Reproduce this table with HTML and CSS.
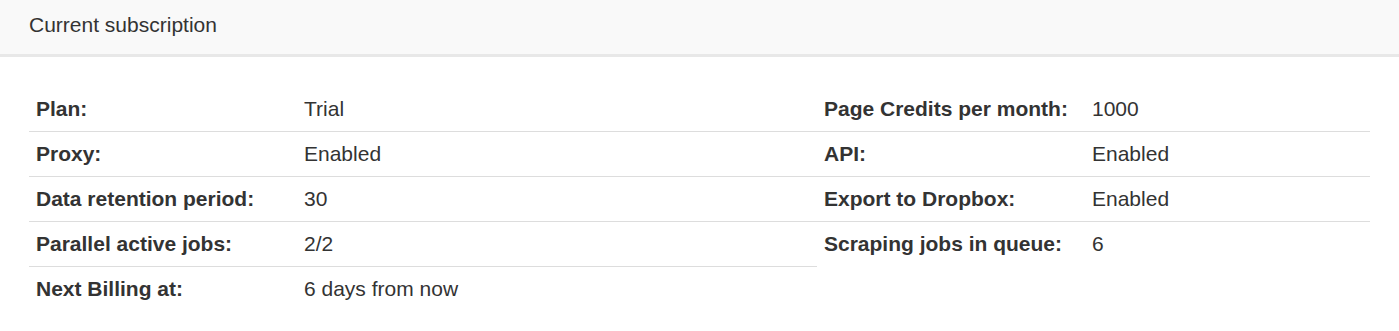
FILE: index.html
```html
<!DOCTYPE html>
<html lang="en">
<head>
    <meta charset="UTF-8">
    <meta name="viewport" content="width=device-width, initial-scale=1.0">
    <title>Current subscription</title>
    <link rel="stylesheet" href="styles.css">
</head>
<body>

    <div class="panel">
        <div class="panel-heading">Current subscription</div>

        <div class="panel-body">
            <table class="details">
                <tr><th>Plan:</th><td>Trial</td></tr>
                <tr><th>Proxy:</th><td>Enabled</td></tr>
                <tr><th>Data retention period:</th><td>30</td></tr>
                <tr><th>Parallel active jobs:</th><td>2/2</td></tr>
                <tr><th>Next Billing at:</th><td>6 days from now</td></tr>
            </table>

            <table class="details">
                <tr><th>Page Credits per month:</th><td>1000</td></tr>
                <tr><th>API:</th><td>Enabled</td></tr>
                <tr><th>Export to Dropbox:</th><td>Enabled</td></tr>
                <tr><th>Scraping jobs in queue:</th><td>6</td></tr>
            </table>
        </div>
    </div>

</body>
</html>
```

FILE: styles.css
```css
body {
    margin: 0;
    font-family: 'Liberation Sans', Arial, sans-serif;
    font-size: 21px;
    color: #333;
    background: #fff;
}

.panel-heading {
    background: #f9f9f9;
    border-bottom: 3px solid #e8e8e8;
    padding: 10px 29px 14px;
    line-height: 30px;
}

.panel-body {
    display: grid;
    grid-template-columns: 788px 1fr;
    align-items: start;
    padding: 30px 29px;
}

/* Two key/value tables side by side */
.details {
    width: 100%;
    border-collapse: collapse;
}

.details th,
.details td {
    padding: 7px 8px 7px 7px;
    line-height: 30px;
    text-align: left;
    vertical-align: top;
    border-top: 1px solid #dddddd;
}

.details tr:first-child th,
.details tr:first-child td {
    border-top: none;
}

.details th {
    width: 253px;
    font-weight: bold;
}
```
